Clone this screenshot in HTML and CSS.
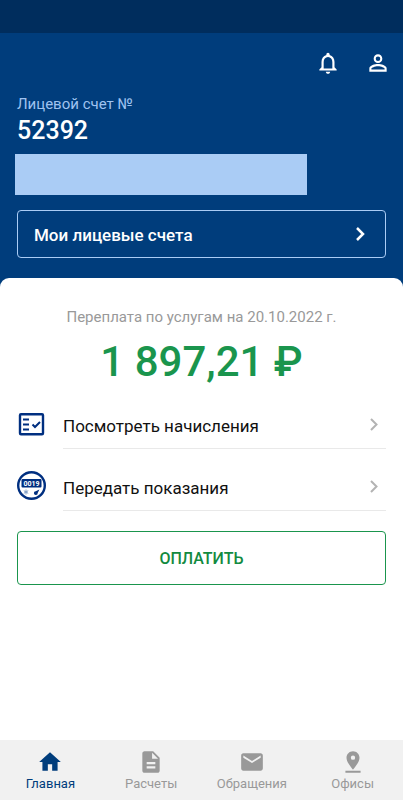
FILE: index.html
```html
<!DOCTYPE html>
<html lang="ru">
<head>
<meta charset="utf-8">
<meta name="viewport" content="width=device-width, initial-scale=1">
<title>Главная</title>
<link rel="stylesheet" href="styles.css">
</head>
<body>
<div class="status-bar"></div>
<header class="header">
  <div class="actions">
    <button class="icon-button" type="button" aria-label="Уведомления">
      <svg viewBox="0 0 24 24"><path d="M12 22c1.100 0 2-.9 2-2h-4c0 1.100.9 2 2 2zm6-6v-5c0-3.070-1.630-5.640-4.500-6.320V4c0-.83-.67-1.500-1.500-1.500s-1.500.67-1.500 1.500v.68C7.640 5.360 6 7.920 6 11v5l-2 2v1h16v-1l-2-2zm-2 1H8v-6c0-2.480 1.510-4.500 4-4.500s4 2.020 4 4.500v6z"/></svg>
    </button>
    <button class="icon-button" type="button" aria-label="Профиль">
      <svg viewBox="0 0 24 24"><path d="M12 5.900a2.100 2.100 0 1 1 0 4.200 2.100 2.100 0 0 1 0-4.200m0 9c2.970 0 6.100 1.460 6.100 2.100v1.100H5.900V17c0-.64 3.130-2.100 6.100-2.100M12 4C9.790 4 8 5.790 8 8s1.790 4 4 4 4-1.790 4-4-1.790-4-4-4zm0 9c-2.670 0-8 1.340-8 4v3h16v-3c0-2.660-5.330-4-8-4z"/></svg>
    </button>
  </div>
  <div class="account">
    <p class="account-label">Лицевой счет №</p>
    <p class="account-number">52392</p>
  </div>
  <div class="address"></div>
  <button class="accounts-button" type="button">
    <span>Мои лицевые счета</span>
    <svg class="chevron-light" viewBox="0 0 10 16"><path d="M2 1l6 6-6 6"/></svg>
  </button>
</header>
<main class="sheet">
  <p class="balance-label">Переплата по услугам на 20.10.2022 г.</p>
  <p class="balance">1 897,21 ₽</p>
  <nav class="links" aria-label="Действия">
    <a class="link" href="#charges">
      <svg class="link-icon" viewBox="0 0 29 30"><path class="stroke" d="M4 5.200h21a1 1 0 0 1 1 1v18a1 1 0 0 1-1 1H4a1 1 0 0 1-1-1v-18a1 1 0 0 1 1-1z"/><path class="stroke thin" d="M6 10.500h6M6 15.500h6M6 20.500h6M15.500 15.500l2.500 2.500 5-5"/></svg>
      <span class="link-row"><span>Посмотреть начисления</span>
      <svg class="chevron" viewBox="0 0 10 16"><path d="M2 1l5.500 5.500L2 12"/></svg></span>
    </a>
    <a class="link" href="#meters">
      <svg class="link-icon" viewBox="0 0 29 30"><circle class="stroke" cx="14.500" cy="14.500" r="13.300"/><rect class="fill" x="4.500" y="8" width="20" height="8.500" rx="1"/><text class="digits" x="14.500" y="15" text-anchor="middle">0019</text><path class="snow" d="M9 18.500v5M6.800 19.700l4.400 2.600M11.200 19.700l-4.400 2.600"/><path class="fill" d="M22.400 18.500l-1.700 3.500a1.900 1.900 0 1 1-2-1.700z"/></svg>
      <span class="link-row"><span>Передать показания</span>
      <svg class="chevron" viewBox="0 0 10 16"><path d="M2 1l5.500 5.500L2 12"/></svg></span>
    </a>
  </nav>
  <button class="pay-button" type="button">ОПЛАТИТЬ</button>
</main>
<nav class="tabs" aria-label="Разделы">
  <a class="tab active" href="#home" aria-current="page">
    <svg viewBox="0 0 24 24"><path d="M10 20v-6h4v6h5v-8h3L12 3 2 12h3v8z"/></svg>
    <span>Главная</span>
  </a>
  <a class="tab" href="#payments">
    <svg viewBox="0 0 24 24"><path d="M14 2H6c-1.100 0-2 .9-2 2v16c0 1.100.9 2 2 2h12c1.100 0 2-.9 2-2V8l-6-6zm2 16H8v-2h8v2zm0-4H8v-2h8v2zm-3-5V3.500L18.500 9H13z"/></svg>
    <span>Расчеты</span>
  </a>
  <a class="tab" href="#requests">
    <svg viewBox="0 0 24 24"><path d="M20 4H4c-1.100 0-2 .9-2 2v12c0 1.100.9 2 2 2h16c1.100 0 2-.9 2-2V6c0-1.100-.9-2-2-2zm0 4l-8 5-8-5V6l8 5 8-5v2z"/></svg>
    <span>Обращения</span>
  </a>
  <a class="tab" href="#offices">
    <svg viewBox="0 0 24 24"><path d="M18 8c0-3.310-2.690-6-6-6S6 4.690 6 8c0 4.500 6 11 6 11s6-6.500 6-11zm-8 0a2 2 0 1 1 4 0 2 2 0 0 1-4 0zM5 20v2h14v-2z"/></svg>
    <span>Офисы</span>
  </a>
</nav>
</body>
</html>
```
FILE: styles.css
```css
* {
  box-sizing: border-box;
}

body {
  display: flex;
  flex-direction: column;
  min-height: 100vh;
  margin: 0;
  background: #003d7c;
  color: #111;
  font-family: Roboto, "Liberation Sans", sans-serif;
}

p {
  margin: 0;
}

button {
  margin: 0;
  background: none;
  font-family: inherit;
  cursor: pointer;
}

a {
  color: inherit;
  text-decoration: none;
}

.status-bar {
  height: 33px;
  background: #002d5d;
}

.header {
  display: flex;
  flex-direction: column;
  padding: 16px 17px 20px;
}

.actions {
  display: flex;
  justify-content: flex-end;
  gap: 22px;
  margin-right: -6px;
}

.icon-button {
  width: 28px;
  height: 28px;
  padding: 1px;
  border: 0;
}

.icon-button svg {
  display: block;
  width: 26px;
  height: 26px;
  fill: #fff;
}

.account-label {
  margin-top: 17px;
  color: #9fc3f0;
  font-size: 15px;
  line-height: 20px;
}

.account-number {
  color: #fff;
  font-size: 25px;
  font-weight: 500;
  line-height: 34px;
}

.address {
  width: 79%;
  height: 41px;
  margin: 6px 0 15px -2px;
  background: #aaccf5;
}

.accounts-button {
  display: flex;
  align-items: center;
  justify-content: space-between;
  height: 48px;
  padding: 2px 20px 0 16px;
  border: 1px solid #aaccf5;
  border-radius: 4px;
  color: #fff;
  font-size: 17px;
  font-weight: 500;
}

.chevron-light,
.chevron {
  width: 10px;
  height: 16px;
  fill: none;
  stroke: #fff;
  stroke-width: 2.5;
}

.chevron {
  stroke: #b3b3b3;
  stroke-width: 2;
}

.sheet {
  display: flex;
  flex: 1;
  flex-direction: column;
  padding: 29px 17px 24px;
  border-radius: 9px 9px 0 0;
  background: #fff;
}

.balance-label {
  color: #999;
  font-size: 15px;
  line-height: 20px;
  text-align: center;
}

.balance {
  margin-top: 10px;
  color: #1a954d;
  font-size: 42px;
  font-weight: 500;
  line-height: 50px;
  text-align: center;
}

.links {
  margin-top: 17px;
}

.link {
  display: flex;
  gap: 17px;
  margin-bottom: 17px;
}

.link-icon {
  flex: none;
  width: 29px;
  height: 30px;
  margin-top: 5px;
}

.stroke {
  fill: none;
  stroke: #002f80;
  stroke-width: 2.4;
}

.thin {
  stroke-width: 2;
}

.fill {
  fill: #002f80;
}

.digits {
  fill: #fff;
  font-size: 7px;
  font-weight: 700;
}

.snow {
  fill: none;
  stroke: #7e9cc4;
  stroke-width: 1;
}

.link-row {
  display: flex;
  flex: 1;
  align-items: center;
  justify-content: space-between;
  height: 45px;
  padding: 0 7px 0 0;
  border-bottom: 1px solid #e9e9e9;
  font-size: 17px;
}

.pay-button {
  height: 54px;
  margin-top: 3px;
  border: 1px solid #1a954d;
  border-radius: 4px;
  color: #128a40;
  font-size: 16px;
  font-weight: 500;
}

.tabs {
  display: grid;
  grid-template-columns: repeat(4, 1fr);
  height: 60px;
  background: #f1f1f1;
}

.tab {
  display: flex;
  flex-direction: column;
  align-items: center;
  padding-top: 9px;
  color: #999;
  font-size: 13px;
  line-height: 18px;
}

.tab svg {
  width: 26px;
  height: 26px;
  fill: currentColor;
}

.active {
  color: #003d7c;
}
```
